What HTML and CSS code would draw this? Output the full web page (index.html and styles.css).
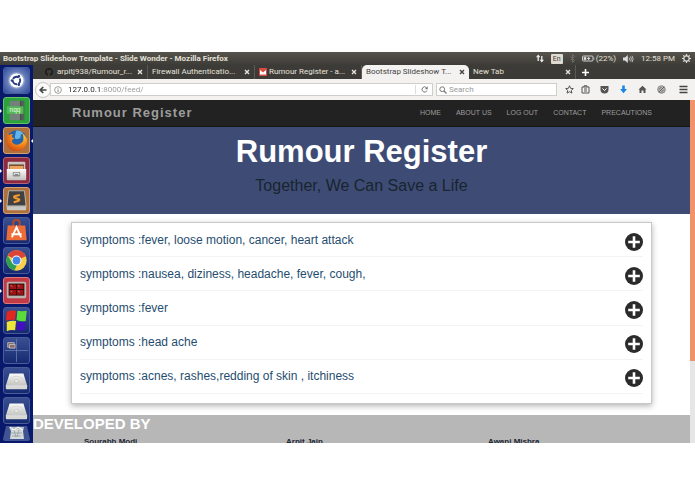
FILE: index.html
```html
<!DOCTYPE html>
<html lang="en">
<head>
  <meta charset="UTF-8">
  <meta name="viewport" content="width=device-width, initial-scale=1.0">
  <title>Rumour Register</title>
  <link rel="stylesheet" href="styles.css">
</head>
<body>
<svg class="defs" width="0" height="0" aria-hidden="true">
  <defs>
    <linearGradient id="metal" x1="0" y1="0" x2="0" y2="1">
      <stop offset="0" stop-color="#fafafa"/><stop offset="1" stop-color="#c2c2be"/>
    </linearGradient>
    <radialGradient id="fox" cx=".7" cy=".2" r=".9">
      <stop offset="0" stop-color="#ffdc3a"/><stop offset=".5" stop-color="#f58a1c"/><stop offset="1" stop-color="#cf4312"/>
    </radialGradient>
    <symbol id="disk" viewBox="0 0 27 27">
      <path d="M6 6h15l4 13H2z" fill="url(#metal)"/>
      <path d="M2 19h23v3q0 1-1 1H3q-1 0-1-1z" fill="#d8d8d5"/>
      <path d="M2 19h23" stroke="#fff" stroke-width=".6"/>
      <ellipse cx="13.5" cy="13.500" rx="7" ry="4.500" fill="none" stroke="#cfcfcc" stroke-width=".7"/>
      <ellipse cx="13.500" cy="14" rx="2.500" ry="1.500" fill="#eee" stroke="#b4b4b0" stroke-width=".6"/>
    </symbol>
    <symbol id="plus" viewBox="0 0 18 18">
      <circle cx="9" cy="9" r="9" fill="#2b2b2b"/>
      <path d="M9 3.200v11.600M3.200 9h11.600" stroke="#fff" stroke-width="2.600"/>
    </symbol>
    <symbol id="close" viewBox="0 0 6 6">
      <path d="M1 1l4 4M5 1L1 5" stroke="currentColor" stroke-width="1.400"/>
    </symbol>
  </defs>
</svg>

<div class="desktop">
  <header class="panel">
    <span class="panel-title">Bootstrap Slideshow Template - Slide Wonder - Mozilla Firefox</span>
    <div class="tray">
      <svg width="8" height="9" viewBox="0 0 8 9"><path d="M2.200 7V2M5.800 2v5" stroke="#eee" stroke-width="1.300"/><path d="M0 3.200L2.200.5l2.200 2.700zM3.600 5.800L5.800 8.500 8 5.800z" fill="#eee"/></svg>
      <span class="lang">En</span>
      <svg width="5" height="9" viewBox="0 0 5 9"><path d="M.5 2.500l4 4-2 2v-8l2 2-4 4" fill="none" stroke="#77756e" stroke-width=".8"/></svg>
      <span class="battery">
        <svg width="13" height="7" viewBox="0 0 13 7"><rect x=".5" y="1" width="10.500" height="5" rx="1" fill="none" stroke="#ddd" stroke-width=".9"/><path d="M2 2.200h2v2.600H2zM12 2.500v2" fill="#ddd" stroke="#ddd" stroke-width=".6"/><path d="M6.700 2v3M5.200 3.500h3" stroke="#ddd"/></svg>
        (22%)
      </span>
      <svg width="11" height="8" viewBox="0 0 11 8"><path d="M0 2.500h2L4.800 0v8L2 5.500H0z" fill="#ddd"/><path d="M6 2.500q1 1.500 0 3M7.500 1.500q1.800 2.500 0 5M9 .8q2.400 3.200 0 6.400" fill="none" stroke="#ddd" stroke-width=".8"/></svg>
      <span>12:58 PM</span>
      <svg width="9" height="9" viewBox="0 0 9 9"><circle cx="4.500" cy="4.500" r="2.700" fill="none" stroke="#ddd" stroke-width="1.200"/><path d="M4.500 0v2M4.500 7v2M0 4.500h2M7 4.500h2M1.300 1.300l1.200 1.200M6.500 6.500l1.200 1.200M7.700 1.300L6.500 2.500M2.500 6.500L1.300 7.700" stroke="#ddd" stroke-width="1.200"/></svg>
    </div>
  </header>

  <aside class="launcher">
    <button class="tile tile-dash" aria-label="Search your computer">
      <svg viewBox="0 0 27 27"><circle cx="13.500" cy="13.500" r="9" fill="#fff" opacity=".25"/><circle cx="13.500" cy="13.500" r="7.500" fill="#fff"/><circle cx="13.500" cy="13.500" r="4" fill="none" stroke="#24397f" stroke-width="2" stroke-dasharray="7 1.380" stroke-dashoffset="3"/><circle cx="8.600" cy="13.500" r="1.400" fill="#24397f"/><circle cx="16" cy="9" r="1.400" fill="#24397f"/><circle cx="16" cy="18" r="1.400" fill="#24397f"/></svg>
    </button>
    <button class="tile tile-green running" aria-label="Notepadqq">
      <svg viewBox="0 0 27 27"><path d="M6 3h12v21H6z" fill="#74817a"/><path d="M18 3h4v21h-4z" fill="#55605a"/><path d="M18 3v21" stroke="#333" stroke-width=".8"/><path d="M3 9h18v8H3z" fill="#55ba55"/><text x="6" y="15" class="nqq">nqq</text></svg>
    </button>
    <button class="tile tile-orange running active" aria-label="Firefox">
      <svg viewBox="0 0 27 27"><circle cx="13.800" cy="13.500" r="11" fill="#2564ae"/><path d="M13 3q5-1 8 3-3 0-3 3t-4 3q-3 0-2-4z" fill="#63b5e8"/><path d="M4 5q0 2 1.500 2.500Q7 6 10 6.500 8 8 8.500 10l3 1q-3 1-3 3 1 4 6 4 5-1 6.500-5 .8-4-1.500-7.500Q26 10 24.800 16 22.500 24.500 13.500 25 4 24.500 2.500 15 2 9 4 5z" fill="url(#fox)"/></svg>
    </button>
    <button class="tile tile-rose running" aria-label="Files">
      <svg viewBox="0 0 27 27"><path d="M4 5q0-1 1-1h17q1 0 1 1v8H4z" fill="#c9c5bf"/><path d="M5.500 7h16v6h-16z" fill="#67422c"/><path d="M6 8.500h15V13H6z" fill="#eca35d"/><path d="M3 12h21v11q0 1-1 1H4q-1 0-1-1z" fill="url(#metal)"/><rect x="9.500" y="15" width="8" height="5" rx="1" fill="#888"/><path d="M11 18.500v-2h5v2" fill="none" stroke="#fff"/></svg>
    </button>
    <button class="tile tile-orange running" aria-label="Sublime Text">
      <svg viewBox="0 0 27 27"><path d="M5 3h17l2 20H3z" fill="#414141"/><path d="M3 19h21v4q0 1-1 1H4q-1 0-1-1z" fill="#c9c9c4"/><path d="M5 3h17l2 17H3z" fill="none" stroke="#b9b9b4"/><path d="M17 7.500l-5.500 1.300q-1.500 1.200.5 2l3.500 1q2 .8.300 2l-5.300 1.500" fill="none" stroke="#f59a30" stroke-width="2.200"/></svg>
    </button>
    <button class="tile" aria-label="Ubuntu Software">
      <svg viewBox="0 0 27 27"><path d="M10 9V5q0-3 3.500-3T17 5v4" fill="none" stroke="#b54a22" stroke-width="2"/><path d="M4 8h19l1.500 16h-22z" fill="#ed6c37"/><path d="M8.500 21l5-11 5 11M8 17.500h11" fill="none" stroke="#fff" stroke-width="2"/></svg>
    </button>
    <button class="tile" aria-label="Chrome">
      <svg viewBox="0 0 27 27"><circle cx="13.500" cy="13.500" r="11" fill="#f9d04b"/><path d="M13.500 13.500L4 8A11 11 0 0 1 23.500 8.800z" fill="#dc4437"/><path d="M4 8l5 8.500 5 2.500-3 5.200A11 11 0 0 1 4 8z" fill="#2e9f57"/><circle cx="13.500" cy="13.500" r="5.300" fill="#fff"/><circle cx="13.500" cy="13.500" r="4.200" fill="#4285e8"/></svg>
    </button>
    <button class="tile tile-red running" aria-label="Terminator">
      <svg viewBox="0 0 27 27"><rect x="3" y="4" width="21" height="18" rx="2" fill="#b8b5ae"/><path d="M5 6h17v13H5z" fill="#330809"/><path d="M6 7h7v5H6zM14 7h7v5h-7zM6 13h7v5H6zM14 13h7v5h-7z" fill="#9d1215"/><path d="M7 8l2 1M15 8l2 1M7 14l2 1M15 14l2 1" stroke="#ec8b87" stroke-width=".8"/></svg>
    </button>
    <button class="tile" aria-label="Windows programs">
      <svg viewBox="0 0 27 27"><path d="M3 4q5-2 10-1l-1 10q-5-1-10 1z" fill="#e02720"/><path d="M14.500 3q5 1 10 0l-1 11q-5 1-10-1z" fill="#5bdb3a"/><path d="M3 15q5-2 10-1l-1 10q-5-1-9 1z" fill="#eee53a"/><path d="M14.500 15q5 1 9 0l-1 9q-5 1-9-1z" fill="#4310bf"/></svg>
    </button>
    <button class="tile" aria-label="Workspace switcher">
      <svg viewBox="0 0 27 27"><path d="M13.500 1v25M1 13.500h25" stroke="#6d7fb1" stroke-width=".8"/><path d="M4 5h7v5H4z" fill="#75686b" stroke="#ddd" stroke-width=".7"/><path d="M6 7h6v4H6z" fill="#8d6a67" stroke="#ddd" stroke-width=".7"/></svg>
    </button>
    <button class="tile" aria-label="Disk one"><svg><use href="#disk"/></svg></button>
    <button class="tile" aria-label="Disk two"><svg><use href="#disk"/></svg></button>
    <button class="trash" aria-label="Trash">
      <svg viewBox="0 0 27 17"><path d="M3 1h21l3 13q0 2-2 2H2q-2 0-2-2z" fill="#405493"/><path d="M6 2l15 0-1 4 1 8H7l1-8z" fill="#d5dad9"/><path d="M6 3h15M8 8h11M9 11h9M11 5l2 7M16 5l-2 7" stroke="#8fa09e" stroke-width=".8"/><path d="M7 2l4 3 4-3 5 3" fill="none" stroke="#fff"/></svg>
    </button>
  </aside>

  <div class="browser">
    <nav class="tabs" aria-label="Browser tabs">
      <div class="tab">
        <svg class="favicon" width="8" height="8" viewBox="0 0 16 16"><path d="M8 0a8 8 0 0 0-2.500 15.600c.4 0 .5-.2.500-.5v-2c-2 .5-2.700-1-2.700-1-.5-1-1-1.200-1-1.200 1 0 1.700 1 1.700 1 .7 1.200 1.700.8 2.200.6 0-.5.300-.8.500-1-2-.3-3.700-1-3.700-4 0-1 .3-1.600.8-2.100 0-.5-.3-1.200.1-2.200 0 0 .7-.2 2.200.8a8 8 0 0 1 4 0c1.500-1 2.100-.8 2.100-.8.400 1 .1 1.700.1 2.200.5.500.8 1.200.8 2.100 0 3-1.700 3.700-3.700 4 .3.300.600.800.600 1.500v2.200c0 .2.100.5.500.4A8 8 0 0 0 8 0z" fill="#1b1b19"/></svg>
        <a href="#">arpitj938/Rumour_r...</a>
        <button aria-label="Close tab"><svg width="6" height="6"><use href="#close"/></svg></button>
      </div>
      <div class="tab">
        <a href="#">Firewall Authenticatio...</a>
        <button aria-label="Close tab"><svg width="6" height="6"><use href="#close"/></svg></button>
      </div>
      <div class="tab">
        <svg width="8" height="8" viewBox="0 0 8 8"><rect width="8" height="8" rx="1" fill="#d84b40"/><path d="M1 2l3 2.500L7 2v4.500H1z" fill="#fff"/></svg>
        <a href="#">Rumour Register - a...</a>
        <button aria-label="Close tab"><svg width="6" height="6"><use href="#close"/></svg></button>
      </div>
      <div class="tab current">
        <a href="#">Bootstrap Slideshow T...</a>
        <button aria-label="Close tab"><svg width="6" height="6"><use href="#close"/></svg></button>
      </div>
      <div class="tab">
        <a href="#">New Tab</a>
        <button aria-label="Close tab"><svg width="6" height="6"><use href="#close"/></svg></button>
      </div>
      <button class="new-tab" aria-label="New tab"><svg width="7" height="7" viewBox="0 0 7 7"><path d="M3.500 0v7M0 3.500h7" stroke="#fff" stroke-width="1.600"/></svg></button>
    </nav>

    <div class="toolbar">
      <button class="back" aria-label="Back"><svg width="8" height="8" viewBox="0 0 8 8"><path d="M7.500 4H1.500M4.200 1L1.200 4l3 3" fill="none" stroke="#444" stroke-width="1.700"/></svg></button>
      <form class="url">
        <svg width="8" height="8" viewBox="0 0 8 8"><circle cx="4" cy="4" r="3.400" fill="none" stroke="#888" stroke-width=".8"/><path d="M4 3.500V6M4 1.900v.8" stroke="#777" stroke-width=".9"/></svg>
        <input type="text" value="127.0.0.1:8000/feed/" aria-label="Address">
        <button type="button" aria-label="Reload"><svg width="7" height="7" viewBox="0 0 7 7"><path d="M5.500 1.700A2.600 2.600 0 1 0 6 4.500" fill="none" stroke="#777"/><path d="M6.700.3v3H3.800z" fill="#777"/></svg></button>
      </form>
      <form class="search">
        <svg width="8" height="8" viewBox="0 0 8 8"><circle cx="3.200" cy="3.200" r="2.400" fill="none" stroke="#777"/><path d="M5 5l2.500 2.500" stroke="#777" stroke-width="1.300"/></svg>
        <input type="search" placeholder="Search" aria-label="Search">
      </form>
      <div class="tools">
        <button aria-label="Bookmark"><svg viewBox="0 0 9 9"><path d="M4.500.8l1.100 2.500 2.700.3-2 1.800.6 2.700-2.400-1.400-2.400 1.400.6-2.700-2-1.800 2.700-.3z" fill="none" stroke="#444" stroke-width=".9"/></svg></button>
        <button aria-label="Bookmarks list"><svg viewBox="0 0 9 9"><path d="M1 2h7v6H1zM3 2V.8h3V2M3 4h3M3 6h3" fill="none" stroke="#555"/></svg></button>
        <button aria-label="Pocket"><svg viewBox="0 0 9 9"><path d="M.5 1h8v3.500a4 4 0 0 1-8 0z" fill="#555"/><path d="M2.500 3.500l2 2 2-2" fill="none" stroke="#fff"/></svg></button>
        <button aria-label="Downloads"><svg viewBox="0 0 9 9"><path d="M3.200.5h2.600V4H8L4.500 8.300 1 4h2.200z" fill="#1a83e4"/></svg></button>
        <button aria-label="Home"><svg viewBox="0 0 9 9"><path d="M4.500.8L.5 4.500h1V8h2V5.500h2V8h2V4.500h1z" fill="#555"/></svg></button>
        <button aria-label="Add-on"><svg viewBox="0 0 9 9"><circle cx="4.500" cy="4.500" r="3.800" fill="#bbb" stroke="#777" stroke-width=".8"/><path d="M2 7l5-5M2 4.500L4.500 2M4 7.500L7 4.500" stroke="#555" stroke-width=".9"/></svg></button>
        <button class="menu" aria-label="Menu"><svg viewBox="0 0 9 9"><path d="M.5 1.500h8M.5 4.500h8M.5 7.500h8" stroke="#444" stroke-width="1.300"/></svg></button>
      </div>
    </div>

    <div class="viewport">
      <div class="page">
        <nav class="navbar">
          <div class="container">
            <a class="brand" href="#">Rumour Register</a>
            <div class="links">
              <a href="#">HOME</a>
              <a href="#">ABOUT US</a>
              <a href="#">LOG OUT</a>
              <a href="#">CONTACT</a>
              <a href="#">PRECAUTIONS</a>
            </div>
          </div>
        </nav>

        <header class="hero">
          <h1>Rumour Register</h1>
          <p>Together, We Can Save a Life</p>
        </header>

        <main class="feed">
          <ul class="card">
            <li><a href="#">symptoms :fever, loose motion, cancer, heart attack</a><button aria-label="Expand"><svg width="18" height="18"><use href="#plus"/></svg></button></li>
            <li><a href="#">symptoms :nausea, diziness, headache, fever, cough,</a><button aria-label="Expand"><svg width="18" height="18"><use href="#plus"/></svg></button></li>
            <li><a href="#">symptoms :fever</a><button aria-label="Expand"><svg width="18" height="18"><use href="#plus"/></svg></button></li>
            <li><a href="#">symptoms :head ache</a><button aria-label="Expand"><svg width="18" height="18"><use href="#plus"/></svg></button></li>
            <li><a href="#">symptoms :acnes, rashes,redding of skin , itchiness</a><button aria-label="Expand"><svg width="18" height="18"><use href="#plus"/></svg></button></li>
          </ul>
        </main>

        <footer class="footer">
          <h2>DEVELOPED BY</h2>
          <div class="team">
            <strong>Sourabh Modi</strong>
            <strong>Arpit Jain</strong>
            <strong>Awani Mishra</strong>
          </div>
        </footer>
      </div>
      <div class="scrollbar"><div class="thumb"></div></div>
    </div>
  </div>
</div>
</body>
</html>
```
FILE: styles.css
```css
* {
  box-sizing: border-box;
}

body {
  margin: 0;
  height: 100vh;
  padding: 52px 0 51px;
  background: #fff;
  font-family: "Liberation Sans", Arial, sans-serif;
  overflow: hidden;
}

a {
  color: inherit;
  text-decoration: none;
}

button {
  display: flex;
  align-items: center;
  justify-content: center;
  padding: 0;
  border: none;
  background: none;
  color: inherit;
  cursor: pointer;
}

input {
  min-width: 0;
  padding: 0;
  border: none;
  outline: none;
  background: none;
  font: inherit;
}

svg {
  display: block;
  flex: none;
}

.defs {
  position: absolute;
}

.desktop {
  display: grid;
  grid-template: 13px minmax(0, 1fr) / 33px minmax(0, 1fr);
  height: 100%;
  overflow: hidden;
}

/* top panel */
.panel {
  grid-column: 1 / -1;
  display: flex;
  align-items: center;
  justify-content: space-between;
  padding: 0 4px 0 3px;
  background: linear-gradient(#56544c, #3d3c37);
  color: #e4e0d8;
  font: 8px/13px Roboto, sans-serif;
  white-space: nowrap;
}

.panel-title {
  font-weight: bold;
}

.tray {
  display: flex;
  align-items: center;
  gap: 7px;
}

.lang {
  padding: 0 2px;
  border-radius: 1px;
  background: #dfdbd2;
  color: #3c3b37;
  font-size: 7px;
  line-height: 10px;
}

.battery {
  display: flex;
  align-items: center;
  gap: 1px;
}

/* launcher */
.launcher {
  display: flex;
  flex-direction: column;
  gap: 3px;
  padding: 2px 3px 0;
  background: #08186a;
  overflow: hidden;
}

.tile {
  position: relative;
  flex: none;
  height: 27px;
  border: 1px solid #4a5c98;
  border-radius: 3px;
  background: linear-gradient(#3a4f91, #162a72);
}

.tile svg {
  width: 25px;
  height: 25px;
}

.tile-dash {
  background: radial-gradient(#a5b4dc, #2c489a);
}

.tile-green {
  border-color: #66c166;
  background: #2ba23b;
}

.tile-orange {
  border-color: #cfa274;
  background: #b0703c;
}

.tile-rose {
  border-color: #b06876;
  background: #8d2a40;
}

.tile-red {
  border-color: #e07a7a;
  background: #c23a45;
}

.nqq {
  fill: #e4ffe4;
  font-size: 7px;
}

.running::before,
.active::after {
  content: "";
  position: absolute;
  top: 11px;
  left: -4px;
  border: 2px solid transparent;
  border-left-color: #fff;
  border-right-width: 0;
}

.active::after {
  left: auto;
  right: -4px;
  border-width: 2px 2px 2px 0;
  border-right-color: #fff;
}

.trash {
  flex: none;
  margin-top: -2px;
}

.trash svg {
  width: 27px;
  height: 17px;
}

/* browser */
.browser {
  display: flex;
  flex-direction: column;
  min-height: 0;
  font: 8px/14px Roboto, sans-serif;
}

.tabs {
  display: flex;
  flex: none;
  height: 14px;
  padding-left: 8px;
  background: #3c3b37;
  color: #e6e3dc;
}

.tab {
  display: flex;
  align-items: center;
  flex: 0 1 107px;
  min-width: 0;
  gap: 2px;
  padding: 0 4px;
  border-right: 1px solid #5b5a54;
  white-space: nowrap;
}

.tab a {
  flex: 1;
  min-width: 0;
  overflow: hidden;
}

.tab .favicon {
  margin-right: 2px;
}

.current {
  border: none;
  border-radius: 5px 5px 0 0;
  background: #f3f2f0;
  color: #444;
}

.new-tab {
  width: 18px;
}

.toolbar {
  display: flex;
  align-items: center;
  flex: none;
  gap: 3px;
  height: 21px;
  padding-right: 7px;
  background: #f3f2f0;
}

.back {
  width: 16px;
  height: 16px;
  margin: 0 -4px 0 2px;
  border: 1px solid #c6c4c1;
  border-radius: 50%;
  background: #fafafa;
}

.url,
.search {
  display: flex;
  align-items: center;
  height: 13px;
  border: 1px solid #d0cecb;
  background: #fff;
}

.url {
  flex: 1;
  gap: 6px;
  padding-left: 3px;
}

.url input {
  flex: 1;
  height: 11px;
  background: linear-gradient(90deg, #222 32px, #999 32px);
  background-clip: text;
  -webkit-background-clip: text;
  color: transparent;
}

.url button {
  width: 17px;
  height: 9px;
  border-left: 1px solid #ddd;
}

.search {
  flex: 0 1 121px;
  min-width: 0;
  gap: 2px;
  padding-left: 2px;
}

.search input {
  flex: 1;
}

.search input::placeholder {
  color: #999;
}

.tools {
  display: flex;
  align-items: center;
  gap: 10px;
  padding-left: 5px;
}

.tools svg {
  width: 9px;
  height: 9px;
}

.tools button:first-child {
  margin-right: -3px;
}

.tools .menu {
  height: 14px;
  padding-left: 3px;
}

/* site */
.viewport {
  display: flex;
  flex: 1;
  min-height: 0;
  font-family: "Liberation Sans", Arial, sans-serif;
}

.page {
  display: flex;
  flex: 1;
  flex-direction: column;
  min-width: 0;
  background: #fff;
}

.scrollbar {
  width: 5px;
  background: #e6e6e6;
}

.thumb {
  height: 76%;
  background: #f0926c;
}

.navbar {
  flex: none;
  padding: 0 38px;
  border-bottom: 1px solid #151515;
  background: #222;
  color: #9d9d9d;
  font-size: 7px;
}

.container {
  display: flex;
  align-items: center;
  justify-content: space-between;
  height: 26px;
}

.brand {
  padding-left: 1px;
  font-size: 13px;
  font-weight: bold;
  letter-spacing: 1px;
}

.links {
  display: flex;
  gap: 15px;
}

.hero {
  flex: none;
  padding: 6px 0 18px;
  background: #3e4c75;
  text-align: center;
}

.hero h1 {
  margin: 0;
  color: #fff;
  font-size: 31px;
  line-height: 38px;
}

.hero p {
  margin: 4px 0 0;
  color: #18242f;
  font-size: 16px;
  line-height: 21px;
}

.feed {
  display: flex;
  flex: 1;
  padding: 8px 38px 11px;
}

.card {
  display: grid;
  flex: 1;
  grid-auto-rows: 1fr;
  margin: 0;
  padding: 0 8px 9px;
  border: 1px solid #c8c8c8;
  box-shadow: 0 2px 6px rgba(0, 0, 0, 0.3);
  list-style: none;
}

.card li {
  display: flex;
  align-items: center;
  justify-content: space-between;
  border-bottom: 1px solid #f3f3f3;
  color: #1f4d70;
  font-size: 12px;
  line-height: 16px;
}

.card button {
  padding-top: 4px;
}

.footer {
  flex: none;
  height: 28px;
  background: #b7b7b7;
  overflow: hidden;
}

.footer h2 {
  margin: 0;
  color: #fff;
  font-size: 15px;
  line-height: 18px;
}

.team {
  display: grid;
  grid-template-columns: repeat(3, 1fr);
  margin-top: 4px;
  padding-left: 51px;
  color: #1d2733;
  font-size: 8px;
  line-height: 10px;
}
```
